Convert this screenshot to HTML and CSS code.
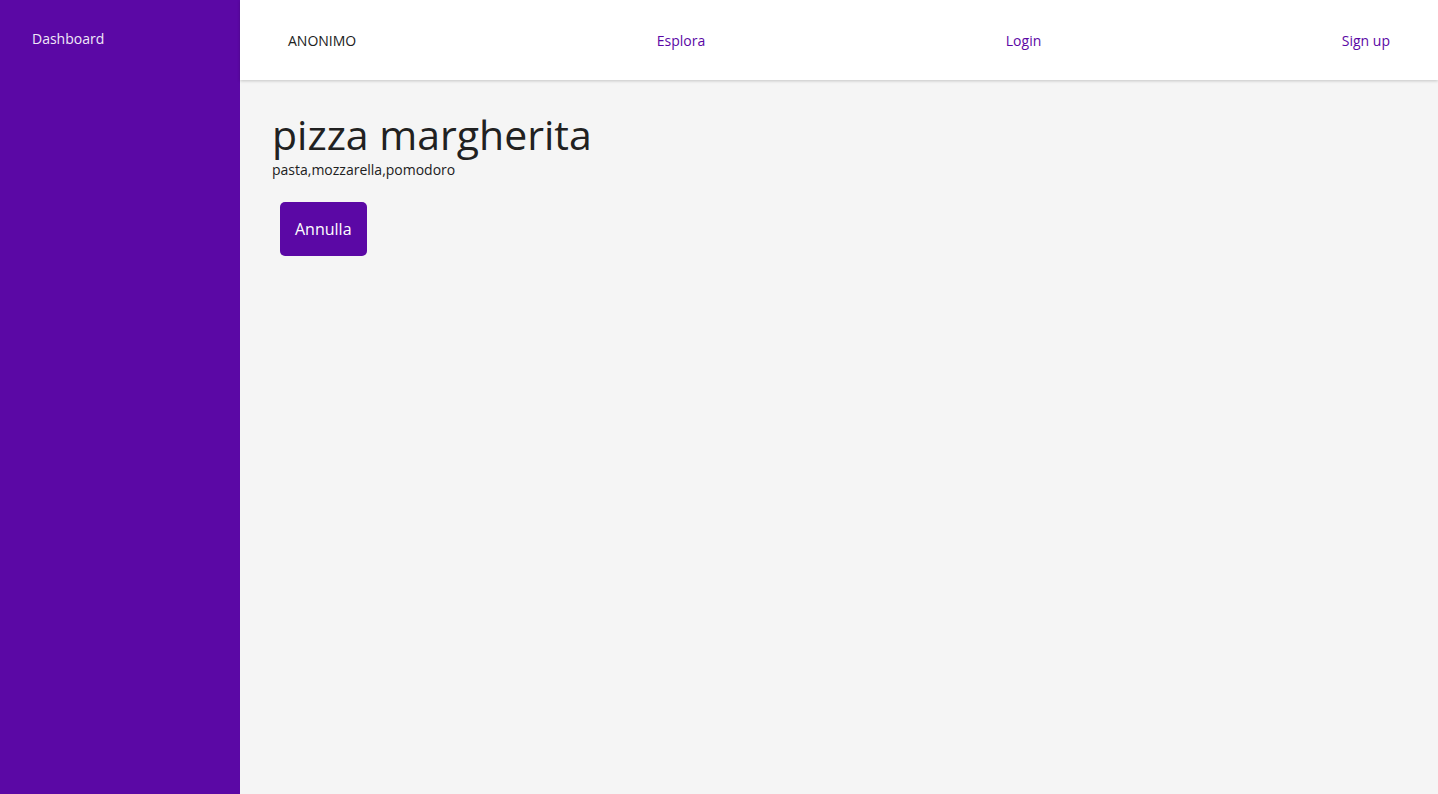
FILE: index.html
```html
<!DOCTYPE html>
<html lang="it">
<head>
<meta charset="utf-8">
<title>pizza margherita</title>
<link rel="stylesheet" href="styles.css">
</head>
<body>
<div class="layout">
  <aside class="sidebar">
    <a class="side-link" href="#">Dashboard</a>
  </aside>
  <div class="main">
    <header class="topbar">
      <span class="user">ANONIMO</span>
      <a class="nav-link" href="#">Esplora</a>
      <a class="nav-link" href="#">Login</a>
      <a class="nav-link" href="#">Sign up</a>
    </header>
    <section class="content">
      <h1 class="title">pizza margherita</h1>
      <p class="ingredients">pasta,mozzarella,pomodoro</p>
      <button class="btn">Annulla</button>
    </section>
  </div>
</div>
</body>
</html>
```
FILE: styles.css
```css
* { box-sizing: border-box; }
html, body { margin: 0; height: 100%; }
body {
  font-family: "Open Sans", "Noto Sans", sans-serif;
  background: #f5f5f5;
  color: #212121;
}
.layout { display: flex; min-height: 100vh; }
.sidebar {
  width: 240px;
  flex: 0 0 240px;
  background: #5b08a5;
  padding: 27px 32px;
}
.side-link {
  color: #f0e8f8;
  text-decoration: none;
  font-size: 14px;
  line-height: 20px;
}
.main { flex: 1; display: flex; flex-direction: column; }
.topbar {
  height: 80px;
  background: #fff;
  box-shadow: 0 1px 3px rgba(0,0,0,0.2);
  display: flex;
  align-items: center;
  justify-content: space-between;
  padding: 0 48px;
  font-size: 14px;
}
.user { color: #212121; }
.nav-link { color: #5b08a5; text-decoration: none; }
.content { padding: 30px 32px; }
.title {
  margin: 0;
  font-weight: 400;
  font-size: 41px;
  line-height: 48px;
}
.ingredients {
  margin: 3px 0 0;
  font-size: 14px;
  line-height: 18px;
}
.btn {
  margin: 23px 0 0 8px;
  height: 54px;
  padding: 0 15px;
  background: #5b08a5;
  color: #fff;
  border: none;
  border-radius: 5px;
  font-family: inherit;
  font-size: 16px;
}
```
